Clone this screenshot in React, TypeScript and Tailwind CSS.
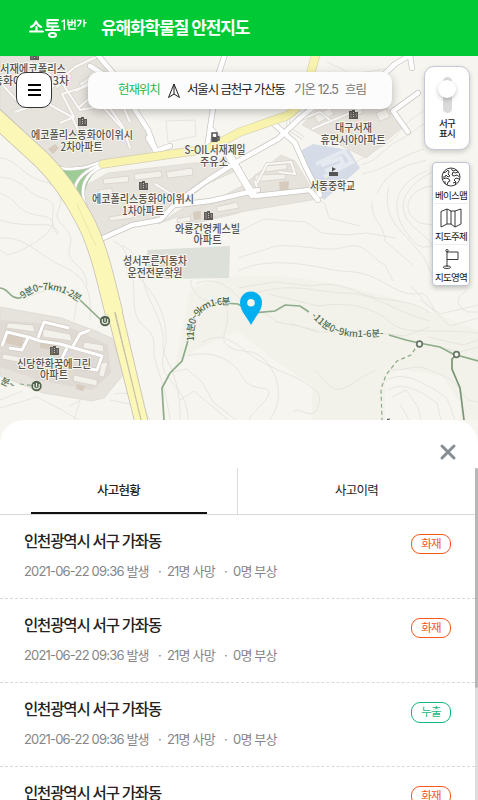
import React from "react";
import { X } from "lucide-react";

const FONT = "font-[Inter,'Noto_Sans_CJK_KR',sans-serif]";

type LabelProps = { x: number; y: number; w: number; children: string; size?: number };

function MapLabel({ x, y, w, children, size = 11 }: LabelProps) {
  return (
    <text
      x={x}
      y={y}
      textLength={w}
      lengthAdjust="spacingAndGlyphs"
      fontSize={size}
      fontWeight={500}
      fill="#55534f"
      stroke="#f8f7f2"
      strokeWidth={2}
      paintOrder="stroke"
      textAnchor="middle"
    >
      {children}
    </text>
  );
}

function Building({ x, y }: { x: number; y: number }) {
  return (
    <g transform={`translate(${x} ${y})`} fill="#5d5a57">
      <path d="M0 1h3V0h3v2h3v7H0z" />
      <path d="M1.5 3h1M1.5 5h1M1.5 7h1M4 2.5h1M4 4.5h1M4 6.5h1M6.8 4h1M6.8 6h1" stroke="#e6e2dc" strokeWidth=".8" />
    </g>
  );
}

const ROADS = [
  "M97 54L113 73L132 105L148 130L156 151",
  "M90 66L106 76L150 86",
  "M225 54L218 76L207 148",
  "M103 238L132 225L160 220L176 203L208 180L240 160L278 139L300 118L320 102",
  "M176 205L210 201L258 190",
  "M212 130L230 154L245 180L255 196L310 190L318 200",
  "M228 156L252 196",
  "M272 122L295 143L306 168L320 195",
  "M156 151L148 138M156 151L170 146",
  "M418 93L393 111L408 132",
  "M410 56L412 68",
  "M374 84L395 64L412 54",
];

const RAMPS = [
  "M50 162C61 171 69 169 81 168C91 167 94 163 103 162",
  "M75 195C72 179 88 169 103 164",
  "M86 207C79 188 84 174 103 166",
];

const LANES = [
  "M0 82L20 104L46 92L75 67L96 57",
  "M15 112L45 102L72 117L87 150",
  "M76 91L101 75L116 91L130 122",
  "M30 62L62 83L80 110L102 106L122 128",
  "M60 123L74 117L62 94L100 82L107 102",
  "M78 108L98 91L123 127L130 148",
  "M257 183L267 164L291 162L295 174L279 172M258 190L255 181",
  "M303 104L289 112L288 128L303 138M299 120L320 112L330 120",
  "M299 110L323 104M312 129L350 113L370 105",
  "M155 184L168 192L192 205",
];

const CONTOURS = [
  "M0 158C15 158 23 176 42 181S64 197 58 211S76 228 70 246S86 263 87 285",
  "M0 177C25 179 26 194 43 198S50 212 53 225S61 235 55 228S28 229 0 220",
  "M0 193C22 202 12 211 42 216S31 249 8 255L0 250",
  "M0 238C26 236 38 255 62 266S92 290 90 320",
  "M113 241C128 247 134 268 134 300S155 324 154 346S163 370 170 420",
  "M121 245C145 256 139 276 149 298S164 328 163 344S181 371 180 420",
  "M124 266C153 284 173 322 164 352S188 382 188 420",
  "M191 280C190 291 202 304 214 300S231 313 225 331S236 350 251 352S292 387 270 420",
  "M196 284C213 276 228 285 240 299S265 310 277 322L298 326L319 331",
  "M202 342C229 329 237 348 260 361S297 376 307 384S322 391 318 407S295 404 295 412",
  "M188 356C206 350 231 356 241 375S270 384 269 393S251 412 249 420",
  "M171 372L187 369L202 382L213 402L236 420",
  "M180 400L194 391L213 407L228 420",
  "M238 271C265 257 306 264 328 269S358 267 388 285S418 286 428 298L435 311",
  "M238 258L276 246C305 244 324 253 345 247S370 258 385 265L393 281",
  "M238 232L264 219L306 222L322 233L346 235L367 233L396 238",
  "M238 288L275 282L312 286C343 279 357 296 383 299S420 305 430 313",
  "M238 301C283 277 314 293 345 293S394 312 430 321",
  "M269 294L318 306C351 301 374 308 390 322S425 328 478 333",
  "M291 323L316 332L363 331L405 336L430 327",
  "M310 191L325 204L329 218L360 226",
  "M342 177C351 161 377 151 389 142S405 120 425 111",
  "M361 165C382 159 381 149 401 139S411 129 427 123",
  "M362 174C387 169 398 157 424 149",
  "M377 193C391 165 413 165 426 160M372 201C369 218 386 227 385 241L413 265",
  "M389 187C382 216 400 230 408 239L424 257L433 278",
  "M427 171C394 183 390 209 406 232S425 245 442 244",
  "M434 171C402 187 393 210 416 229S431 248 440 251",
  "M433 186C410 187 397 211 420 223L433 225",
  "M411 286L430 307L450 326L478 318M420 300L440 314L478 305",
  "M465 292C455 297 456 307 468 312L478 312",
  "M389 369C403 373 413 363 427 369S454 378 460 390S474 401 478 402",
  "M383 382C393 374 408 376 418 381S446 394 449 403L455 420",
  "M388 390C401 382 414 389 424 394L437 403L441 420",
  "M392 397L406 390L418 407L421 420M400 404L409 420",
  "M375 371C356 377 346 394 332 388L315 370",
  "M425 344L460 352L478 347M428 337L463 345L478 340",
  "M60 319L100 332M0 340L10 336M70 406L80 400L74 420M22 299L60 285L77 299L74 321",
  "M115 394C141 389 143 408 150 420M110 400L135 405L142 420",
  "M0 408L37 397L60 409L79 420M0 400L22 391",
  "M327 62L352 74L385 69M330 80L345 91L363 82",
  "M166 121L195 120L196 136L168 142Z",
];

const TRAILS = [
  "M0 288C10 289 9 299 20 298L26 294M80 300L101 320",
  "M164 420L162 388L170 373L182 361L187 344L190 330",
  "M224 303L238 304L253 313L275 311L285 305L300 306L309 312M389 335L406 340L419 343L440 347L453 354L478 361",
];

function BaseMap() {
  return (
    <svg className="block h-[390px] w-full" viewBox="0 56 478 390" fontFamily="'Noto Sans CJK KR', sans-serif">
      <rect y="56" width="478" height="390" fill="#f6f5ef" />
      <path d="M190 290C240 262 330 280 400 300L478 330V446H160Z" fill="#f2f1ea" />
      <path d="M160 446L170 372L195 350L238 331L274 360L312 385V446ZM385 446V378L400 369L442 376L460 402V446Z" fill="#f6f5ef" />
      <g fill="none" stroke="#e7e5de" strokeWidth="1">
        {CONTOURS.map((d) => <path key={d} d={d} />)}
      </g>

      <g fill="#e6e2dc" stroke="#ddd8d1" strokeWidth=".7">
        <path d="M0 56H95L131 96L154 145L150 153L100 160L83 169L61 169L0 108Z" />
        <path d="M108 173L194 163L215 162L230 155L242 168L207 184L178 206L154 218L133 223L105 239L84 208L85 186Z" />
        <path d="M158 224L185 207L253 195L239 213L197 223L177 217Z" />
        <path d="M242 186L281 155L295 161L318 199L252 210L180 223L205 205Z" />
        <path d="M0 307L62 318L112 338L124 374L104 398L92 401L43 393L0 376Z" />
        <path d="M302 125L319 107L343 96L380 101L405 125L366 158L344 147Z" />
      </g>
      <path d="M0 320L65 325L108 345L111 373L92 390L42 381L0 367Z" fill="#dfdad3" />
      <path d="M147 250L230 246L229 278L165 279L147 268Z" fill="#dddfd9" />
      <path d="M300 151L313 144L349 150L360 168L324 200L313 188Z" fill="#d5dce7" />
      <path d="M316 164L344 151L352 162L324 177M321 165L341 158L343 164L325 171" fill="none" stroke="#e5eaf0" strokeWidth="4" />

      <g fill="#f3f1ec" stroke="#d7d1c9" strokeWidth=".8">
        <path d="M103 179L128 176L129 182L104 184ZM134 174L161 171L162 177L135 180ZM166 172L192 168L193 175L168 178Z" />
        <path d="M98 190L112 188V194L101 195ZM109 217L133 213V218L110 221ZM177 219L190 216L191 221L178 223Z" />
        <path d="M8 323L33 325L35 332L6 328ZM43 329L70 334L72 341L43 337ZM84 342L103 345L104 352L83 348ZM101 363L108 362L104 377L99 376ZM74 375L97 380V386L73 381ZM3 354L25 358L24 363L2 359Z" />
        <path d="M314 116L330 108L334 114L318 123ZM376 113L386 109L390 117L380 121ZM255 175L286 174L285 179L255 182ZM264 166L287 164L287 169L265 172ZM349 111L361 106L363 113L350 117Z" />
        <path d="M216 207L237 202L239 208L218 212ZM22 105L43 99L44 105L24 110ZM79 83L91 76L93 82L82 89ZM53 83L69 72L72 77L57 89Z" />
      </g>
      <path d="M8 333L24 335L22 347L6 343ZM40 340L56 342L54 350L40 348ZM77 384L85 386L83 391L76 389ZM48 149L55 144L59 148L53 154ZM279 182L289 181L288 193L280 194ZM193 212L201 211V219L194 220Z" fill="#d6cbbd" />

      <g fill="none" strokeLinejoin="round">
        <g stroke="#d5d0ca" strokeWidth="3.4">{LANES.map((d) => <path key={d} d={d} />)}</g>
        <g stroke="#faf9f7" strokeWidth="2.2">{LANES.map((d) => <path key={d} d={d} />)}</g>
        <g stroke="#c9c5c0" strokeWidth="6" strokeLinecap="round">{ROADS.map((d) => <path key={d} d={d} />)}</g>
        <g stroke="#fff" strokeWidth="4.6" strokeLinecap="round">{ROADS.map((d) => <path key={d} d={d} />)}</g>
        <path d="M54 168L87 168L103 166Q84 176 83 207L72 194Z" fill="#9dcd95" />
        <g stroke="#c9c5c0" strokeWidth="3.8">{RAMPS.map((d) => <path key={d} d={d} />)}</g>
        <g stroke="#fff" strokeWidth="2.6">{RAMPS.map((d) => <path key={d} d={d} />)}</g>
        <path d="M2 346L7 332L28 337L40 341L60 344L102 356L97 370L82 368M38 338L44 322L69 328M28 338L22 350L9 348M67 348L62 358L66 361M73 346L80 334L90 330" stroke="#cfc8c0" strokeWidth="4.4" />
        <path d="M2 346L7 332L28 337L40 341L60 344L102 356L97 370L82 368M38 338L44 322L69 328M28 338L22 350L9 348M67 348L62 358L66 361M73 346L80 334L90 330" stroke="#fff" strokeWidth="3" />
        <path d="M103 164L172 154L208 149L240 132L286 116Q303 108 311 72L316 54" stroke="#d6cfb2" strokeWidth="9" strokeLinecap="round" />
        <path d="M103 164L172 154L208 149L240 132L286 116Q303 108 311 72L316 54" stroke="#f8f3ad" strokeWidth="7.8" strokeLinecap="round" />
        <path d="M-7 115L42 160Q65 183 83 217Q96 240 106 281L114 313" stroke="#c5beb4" strokeWidth="18.5" />
        <path d="M109 305L118 341L139 424M117 305L124 335L145 424" stroke="#c5beb4" strokeWidth="8" />
        <path d="M-7 115L42 160Q65 183 83 217Q96 240 106 281L114 313" stroke="#fbf7b7" strokeWidth="17" />
        <path d="M109 305L118 341L139 424M117 305L124 335L145 424" stroke="#fbf7b7" strokeWidth="6.4" />
        <path d="M115 312L121 337L142 424" stroke="#c9c1ac" strokeWidth="1.2" />
        <path d="M77 204L88 229L96 246" stroke="#eee6aa" strokeWidth="1" />
      </g>

      <g fill="none" stroke="#8dac89" strokeWidth="1.7">
        {TRAILS.map((d) => <path key={d} d={d} />)}
        <path d="M456 355L452 359V369L460 388L464 420" stroke="#789575" strokeWidth="1.7" />
        <path d="M419 343L411 355L397 361L386 375L381 389L382 420M20 384L35 386" strokeDasharray="4 3" strokeWidth="1.2" />
      </g>
      <g fill="#f7f7f0" stroke="#667666" strokeWidth="1.7">
        <circle cx="419.5" cy="344" r="2.8" /><circle cx="456.5" cy="354.5" r="2.8" />
      </g>
      {[[105, 321], [36.5, 386]].map(([cx, cy]) => (
        <g key={cx} transform={`translate(${cx} ${cy})`}>
          <circle r="5.2" fill="#54664f" />
          <path d="M-2.7-2V1.5Q0 4 2.7 1.5V-2M0-3V1" fill="none" stroke="#eff2e9" strokeWidth="1.1" />
        </g>
      ))}

      <defs>
        <path id="trail-a" d="M23 299C38 287 56 285 80 303" />
        <path id="trail-b" d="M194 341C192 319 201 302 233 305" />
        <path id="trail-c" d="M311 316C329 337 350 340 392 335" />
      </defs>
      <g fontSize="9.5" fontWeight="500" fill="#4e6b4c" stroke="#f4f3ec" strokeWidth="1.5" paintOrder="stroke">
        <text><textPath href="#trail-a" textLength="61">9분0~7km1-2분</textPath></text>
        <text><textPath href="#trail-b" textLength="61">11분0~9km1-6분</textPath></text>
        <text><textPath href="#trail-c" textLength="79">-11분0~9km1-6분-</textPath></text>
        <text x="0" y="383" transform="rotate(25 0 383)">분~</text>
      </g>

      <MapLabel x={33} y={73} w={66}>서재에코폴리스</MapLabel>
      <MapLabel x={31} y={85} w={76}>동화아이위시3차</MapLabel>
      <Building x={30} y={51} />
      <Building x={78} y={117} />
      <MapLabel x={82} y={139} w={102}>에코폴리스동화아이위시</MapLabel>
      <MapLabel x={81.5} y={150.5} w={42}>2차아파트</MapLabel>
      <Building x={139} y={181} />
      <MapLabel x={143} y={203} w={102}>에코폴리스동화아이위시</MapLabel>
      <MapLabel x={143} y={214.5} w={42}>1차아파트</MapLabel>
      <path d="M212 133h5v8h-5zM217 136l2 1v3h-2" fill="none" stroke="#555" strokeWidth="1.5" />
      <path d="M212 137h5v5h-5z" fill="#555" />
      <MapLabel x={215} y={153.5} w={61}>S-OIL서재제일</MapLabel>
      <MapLabel x={214} y={166} w={28}>주유소</MapLabel>
      <Building x={204} y={211} />
      <MapLabel x={207.5} y={232.5} w={65}>와룡건영케스빌</MapLabel>
      <MapLabel x={207.5} y={244} w={28}>아파트</MapLabel>
      <MapLabel x={155} y={264.5} w={64}>성서푸른지동차</MapLabel>
      <MapLabel x={155} y={276.5} w={55}>운전전문학원</MapLabel>
      <Building x={50} y={346} />
      <MapLabel x={54} y={367.5} w={74}>신당한화꿈에그린</MapLabel>
      <MapLabel x={54} y={379} w={28}>아파트</MapLabel>
      <Building x={349} y={110} />
      <MapLabel x={353.5} y={132} w={37}>대구서재</MapLabel>
      <MapLabel x={353} y={144} w={65}>휴먼시아아파트</MapLabel>
      <path d="M329 172h9v4h-9zM332 172v-5l4 2-3 2" fill="#555" />
      <MapLabel x={332.5} y={189.5} w={45}>서동중학교</MapLabel>
      <path d="M387 419.500l3-.5" fill="none" stroke="#555" strokeWidth="1.200" />

      <path d="M251 325C247 317 240 311 240 302.500A11 11 0 0 1 262 302.500C262 311 255 317 251 325Z" fill="#00aff0" />
      <circle cx="251" cy="302.700" r="3.800" fill="#f4f3ec" />
    </svg>
  );
}

function Header() {
  return (
    <header className="flex h-14 shrink-0 items-center bg-[#00c936] pl-[29px] text-white">
      <svg className="h-[24px] w-[59px]" viewBox="29 16 59 24" fill="none" stroke="currentColor" strokeLinecap="round" strokeLinejoin="round" aria-label="소통1번가">
        <g strokeWidth="2.1">
          <path d="M36 21.500C35.500 24 33 26 31 27M36 21.500C37 24 39 26 41 27M36.500 27V31.500M30 31.500H43" />
          <path d="M47.500 20H58M47.500 20V26.500H58M48 23.200H57M52.500 26.500V29.500M46 30H59.500" />
          <ellipse cx="52.500" cy="35" rx="3.500" ry="2" />
        </g>
        <g strokeWidth="1.4">
          <path d="M62 21.500L64.300 20V29.500" />
          <path d="M68 20V25H72V20M68 22.500H72M72 22.500H75M75 20V26.500M69 26.500V29H75.500" />
          <path d="M77.500 20.500H81C81 23 80 24.500 78 26M84 20V26.500M84 22.700H86" />
        </g>
      </svg>
      <h1 className="ml-[13px] whitespace-nowrap text-[17px] font-bold leading-6 tracking-[-1.1px]">유해화학물질 안전지도</h1>
    </header>
  );
}

function LocationPill() {
  return (
    <div className="absolute left-[88px] top-4 flex h-[37px] w-[304px] items-center whitespace-nowrap rounded-[10px] bg-[#fcfcfc] pl-[30px] text-[12.500px] tracking-[-1.1px] text-[#222] shadow-[0_3px_10px_rgba(0,0,0,0.25)]">
      <span className="w-[42px] text-[#20b94b]">현재위치</span>
      <svg className="ml-[7px] h-4 w-[14px]" viewBox="0 0 14 16" fill="none" stroke="#222" strokeLinejoin="round">
        <path d="M7 1L12.500 14.500L7 11L1.500 14.500ZM7 1V11" />
      </svg>
      <span className="ml-[6px] w-[99px] tracking-[-1.15px]">서울시 금천구 가산동</span>
      <span className="ml-[8px] w-[46px] tracking-[-0.9px] text-[#777]">기온 12.5</span>
      <span className="ml-[5px] text-[#777]">흐림</span>
    </div>
  );
}

function GlobeIcon() {
  return (
    <svg className="h-5 w-5" viewBox="0 0 20 20" fill="none" stroke="#222" strokeWidth=".9">
      <circle cx="10" cy="10" r="9" />
      <path d="M2 6L5 5L7 3L8 5L7 7L9 9L7 10L5 8L4 10L1.500 10M2 12L5 11L8 12L9 14L7 15L6 18M4 17L4 14M10 1.500L12 4L15 3L17 5L14 6L12 5L11 8L13 9L16 8L18.500 10M18 12L15 11L13 13L15 15L14 18M12 16L15 15" />
    </svg>
  );
}

function FoldedMapIcon() {
  return (
    <svg className="h-5 w-[22px]" viewBox="0 0 22 20" fill="none" stroke="#222" strokeWidth=".9" strokeLinejoin="round">
      <path d="M1 3.500L7 1L11 3L15 3L21 1V16L15 19L11 16L7 16L1 19ZM7 1V16M11 3V16M15 3V19" />
    </svg>
  );
}

function FlagIcon() {
  return (
    <svg className="h-5 w-[18px]" viewBox="0 0 18 20" fill="none" stroke="#222" strokeWidth=".9">
      <circle cx="5" cy="1.700" r="1.200" />
      <path d="M5 3V18M5 3H16V10.500H5" /><ellipse cx="5" cy="18.200" rx="3.700" ry="1.300" />
    </svg>
  );
}

const TOOLS = [
  { label: "베이스맵", icon: <GlobeIcon /> },
  { label: "지도주제", icon: <FoldedMapIcon /> },
  { label: "지도영역", icon: <FlagIcon /> },
];

function MapSection() {
  return (
    <section className="relative h-[364px] shrink-0 overflow-hidden bg-[#f6f5ef]">
      <BaseMap />
      <button className="absolute left-4 top-4 flex size-9 flex-col items-center justify-center gap-[3px] rounded-[10px] border border-[#333] bg-white" aria-label="메뉴">
        <i className="h-0.5 w-[13px] bg-black" /><i className="h-0.5 w-[13px] bg-black" /><i className="h-0.5 w-[13px] bg-black" />
      </button>
      <LocationPill />
      <div className="absolute left-[424px] top-[10px] flex h-[84px] w-[46px] flex-col items-center rounded-[10px] border border-[#c4c9d5] bg-white pt-[10px] shadow-[0_2px_5px_rgba(0,0,0,0.18)]">
        <div className="flex h-9 w-[9px] justify-center rounded-full bg-[#dadada] pt-[3px]">
          <i className="size-[18px] shrink-0 rounded-full bg-white shadow-[0_2px_4px_rgba(0,0,0,0.22)]" />
        </div>
        <p className="mt-[6px] text-center text-[9.500px] font-medium leading-[10px] tracking-[-0.8px] text-[#222]">서구<br />표시</p>
      </div>
      <nav className="absolute left-[432px] top-[106px] h-[124px] w-[38px] rounded-[4px] border border-[#bfc6d4] bg-white px-px shadow-[0_2px_5px_rgba(0,0,0,0.22)]">
        {TOOLS.map(({ label, icon }) => (
          <button key={label} className="flex h-[41px] w-full flex-col items-center border-b border-[#eee] pt-[4px] last:border-0">
            {icon}
            <span className="mt-[3px] whitespace-nowrap text-[9.500px] leading-3 tracking-[-0.7px] text-[#111]">{label}</span>
          </button>
        ))}
      </nav>
    </section>
  );
}

const INCIDENTS = [
  { id: 1, kind: "화재" },
  { id: 2, kind: "화재" },
  { id: 3, kind: "누출" },
  { id: 4, kind: "화재" },
];

function Incident({ kind }: { kind: string }) {
  return (
    <li className="flex h-[84px] shrink-0 justify-between border-b border-dashed border-[#d9d9d9] pl-6 pr-6">
      <div className="whitespace-nowrap">
        <h2 className="mt-[15px] text-[15.500px] font-medium leading-6 tracking-[-1.15px] text-[#222]">인천광역시 서구 가좌동</h2>
        <p className="mt-[7px] flex text-[13px] leading-5 tracking-[-0.82px] text-[#858585]">
          <span className="w-[125px]">2021-06-22 09:36 발생</span>
          <span className="ml-[9px] w-[9px]">·</span>
          <span className="w-[48px]">21명 사망</span>
          <span className="ml-[9px] w-[9px]">·</span>
          <span>0명 부상</span>
        </p>
      </div>
      <span className={`mt-[19px] flex w-10 items-center justify-center rounded-[9px] border pt-px text-[11.500px] leading-none tracking-[-0.8px] ${kind === "누출" ? "h-[21px] border-[#10b77d] text-[#10b77d]" : "h-5 border-[#f5571c] text-[#f5571c]"}`}>{kind}</span>
    </li>
  );
}

function IncidentSheet() {
  return (
    <main className="relative h-[380px] shrink-0 bg-[#f6f5ef]">
      <div className="flex h-full flex-col rounded-t-[24px] bg-white">
        <div className="flex h-12 shrink-0 items-start justify-end pr-[18px] pt-5">
          <button aria-label="닫기"><X className="size-6 text-[#868e96]" strokeWidth={3} /></button>
        </div>
        <div className="flex h-[332px]">
          <div className="flex min-w-0 flex-1 flex-col overflow-hidden">
            <div className="flex h-[47px] shrink-0 border-b border-[#d9d9d9] text-[12.500px] font-medium tracking-[-0.8px] text-[#222]">
              <button className="flex w-[238px] justify-center border-r border-[#dcdcdc]">
                <span className="flex h-[46px] w-[176px] items-center justify-center border-b-2 border-[#111] pt-[3px]">사고현황</span>
              </button>
              <button className="flex-1 pt-px font-normal">사고이력</button>
            </div>
            <ul className="flex flex-col">
              {INCIDENTS.map(({ id, kind }) => <Incident key={id} kind={kind} />)}
            </ul>
          </div>
          <div className="w-[3px] bg-[#dedede]"><div className="h-[220px] rounded-full bg-[#b7b7b7]" /></div>
        </div>
      </div>
    </main>
  );
}

export default function App() {
  return (
    <div className={`flex h-[800px] w-full flex-col overflow-hidden bg-white ${FONT}`}>
      <Header />
      <MapSection />
      <IncidentSheet />
    </div>
  );
}
